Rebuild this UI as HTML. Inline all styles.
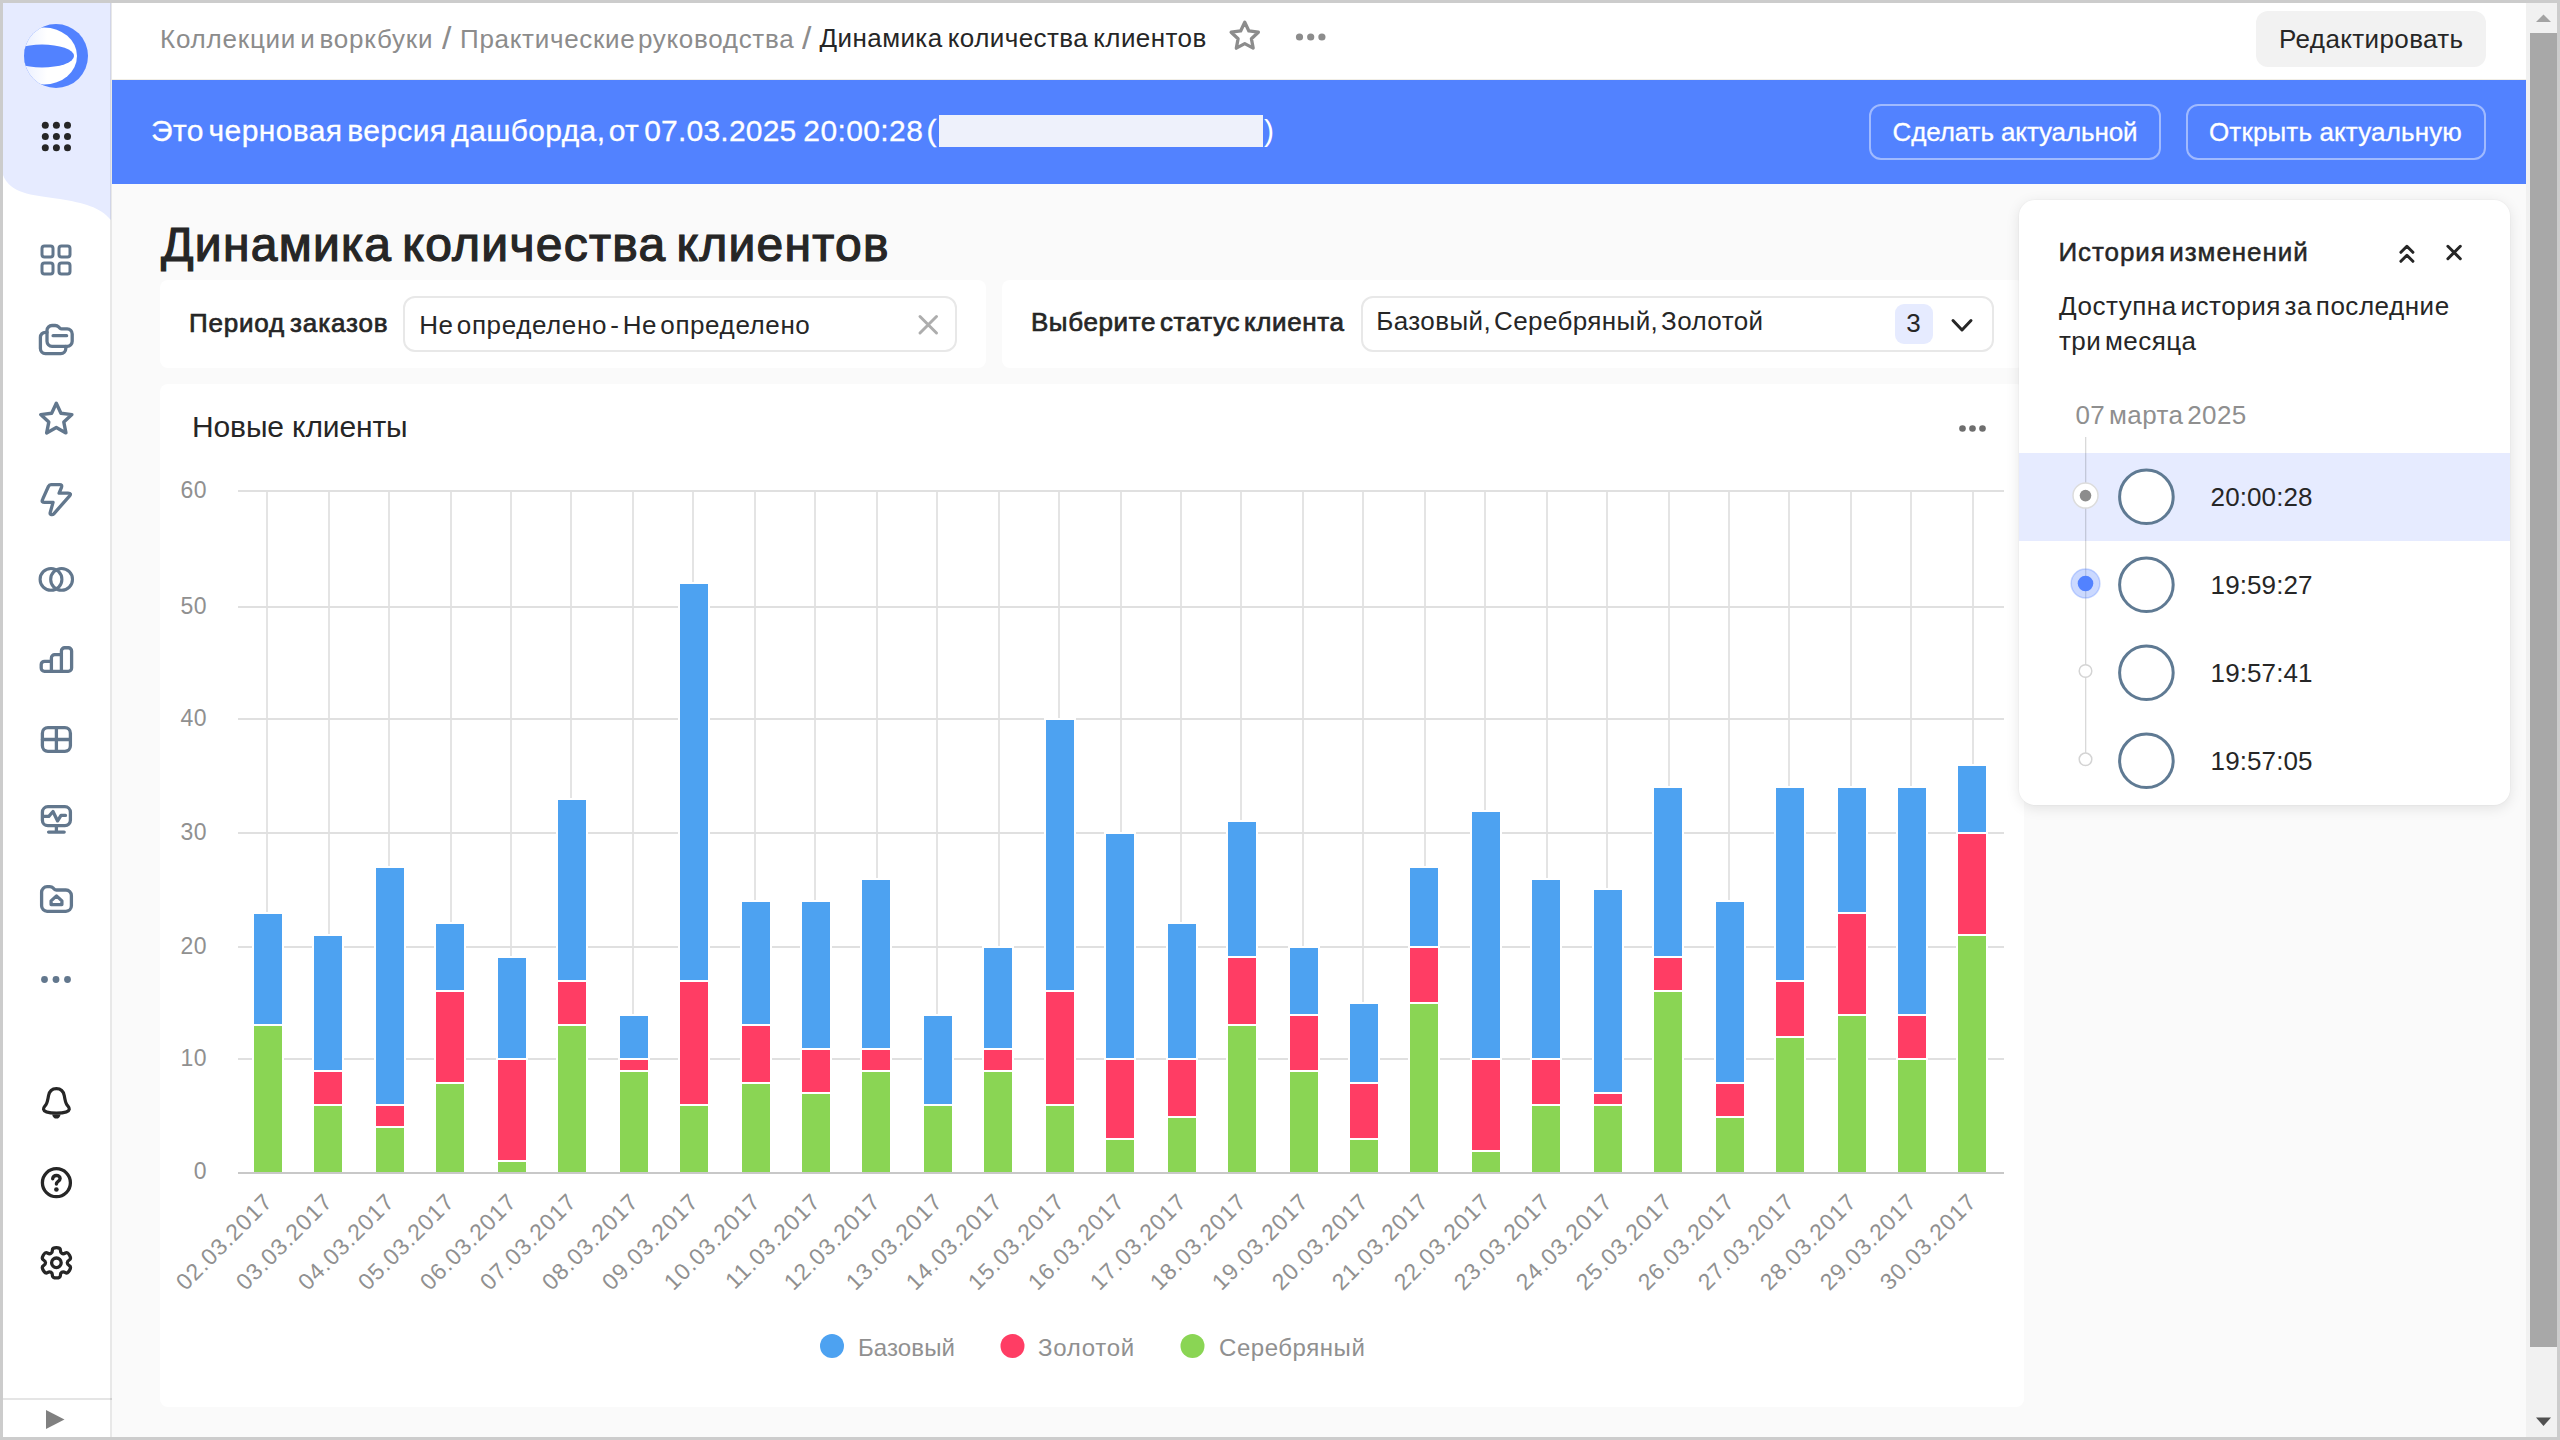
<!DOCTYPE html>
<html lang="ru">
<head>
<meta charset="utf-8">
<title>Динамика количества клиентов</title>
<style>
html,body{margin:0;padding:0;}
body{width:2560px;height:1440px;overflow:hidden;background:#ccc;font-family:"Liberation Sans",sans-serif;color:#262626;position:relative;}
.abs{position:absolute;}
.t{position:absolute;white-space:nowrap;line-height:1;}
#page{position:absolute;left:3px;top:3px;width:2554px;height:1434px;background:#fafafa;overflow:hidden;}
/* coordinates inside #page are offset by -3; use #o wrapper to keep absolute device coords */
#o{position:absolute;left:-3px;top:-3px;width:2560px;height:1440px;}
#side{left:3px;top:3px;width:109px;height:1434px;background:#fff;}
#sideline{left:110px;top:3px;width:2px;height:1434px;background:rgba(0,0,0,.09);}
#head{left:112px;top:3px;width:2414px;height:77px;background:#fff;}
#headline{left:112px;top:79px;width:2414px;height:1px;background:#f1eee6;}
#banner{left:112px;top:80px;width:2414px;height:104px;background:#5282ff;}
.bc{font-size:27px;top:24px;color:#8c8c8c;}
.card{position:absolute;background:#fff;border-radius:8px;}
.btn-o{position:absolute;border:2px solid rgba(255,255,255,.45);border-radius:12px;box-sizing:border-box;}
#sb{left:2526px;top:3px;width:31px;height:1434px;background:#f1f1f1;}
#sbthumb{left:2530px;top:33px;width:27px;height:1314px;background:#a8a8a8;}
#panel{left:2019px;top:200px;width:491px;height:605px;background:#fff;border-radius:16px;box-shadow:0 0 0 1px rgba(0,0,0,.015),0 3px 14px rgba(0,0,0,.10);overflow:hidden;}

@media (max-width:1400px){html{zoom:.5}}

</style>
</head>
<body>
<div id="page"><div id="o">
<div class="abs" id="side"></div>
<svg class="abs" style="left:3px;top:3px" width="108" height="230" viewBox="3 3 108 230"><path d="M3 3 H111 V220 C100 207 84 203 60 199 C30 195 10 193 3 175 Z" fill="#e6ebff"/></svg>
<div class="abs" id="sideline"></div>
<svg class="abs" style="left:22px;top:22px" width="68" height="68" viewBox="-34 -34 68 68"><defs><linearGradient id="lg" x1="0" y1="0" x2="1" y2="0"><stop offset="0" stop-color="#dfe7ff"/><stop offset="0.55" stop-color="#ffffff"/></linearGradient><clipPath id="lc"><circle r="32"/></clipPath></defs><circle r="32" fill="#5282ff"/><g clip-path="url(#lc)"><ellipse cx="-12" cy="0" rx="33" ry="28.5" fill="url(#lg)"/><ellipse cx="-14" cy="0" rx="32" ry="11.5" fill="#5282ff"/></g></svg>
<svg class="abs" style="left:36px;top:116px" width="40" height="40" viewBox="36 116 40 40" fill="#262626"><circle cx="45.3" cy="125.3" r="3.5"/><circle cx="56.4" cy="125.3" r="3.5"/><circle cx="67.5" cy="125.3" r="3.5"/><circle cx="45.3" cy="136.5" r="3.5"/><circle cx="56.4" cy="136.5" r="3.5"/><circle cx="67.5" cy="136.5" r="3.5"/><circle cx="45.3" cy="147.7" r="3.5"/><circle cx="56.4" cy="147.7" r="3.5"/><circle cx="67.5" cy="147.7" r="3.5"/></svg>
<svg class="abs" style="left:34px;top:238px" width="45" height="45" viewBox="-22.00 -22.00 45 45" fill="none" stroke-linecap="round" stroke-linejoin="round" ><g stroke="#62778d" stroke-width="3"><rect x="-14" y="-14" width="11" height="11" rx="2.5"/><rect x="3" y="-14" width="11" height="11" rx="2.5"/><rect x="-14" y="3" width="11" height="11" rx="2.5"/><rect x="3" y="3" width="11" height="11" rx="2.5"/></g></svg>
<svg class="abs" style="left:34px;top:317px" width="45" height="45" viewBox="-22.00 -22.00 45 45" fill="none" stroke-linecap="round" stroke-linejoin="round" ><g stroke="#62778d" stroke-width="3.3"><path d="M-9 2.3 V-8.5 a5 5 0 0 1 5 -5 h3.2 c1.3 0 2.5 .5 3.4 1.4 l1.2 1.2 c.5 .5 1.2 .8 1.9 .8 H11.2 a5 5 0 0 1 5 5 V2.3 a5 5 0 0 1 -5 5 H-4 a5 5 0 0 1 -5 -5 Z"/><path d="M-9 -6.7 h-1.6 a5 5 0 0 0 -5 5 V9.6 a5 5 0 0 0 5 5 H4.8 a5 5 0 0 0 5 -5 V7.3"/><path d="M-2.9 -3.3 H10.6"/></g></svg>
<svg class="abs" style="left:34px;top:397px" width="45" height="45" viewBox="-22.30 -22.65 45 45" fill="none" stroke-linecap="round" stroke-linejoin="round" ><path d="M0.00 -16.40 L4.64 -6.39 L15.60 -5.07 L7.51 2.44 L9.64 13.27 L0.00 7.90 L-9.64 13.27 L-7.51 2.44 L-15.60 -5.07 L-4.64 -6.39 Z" stroke="#62778d" stroke-width="3.4"/></svg>
<svg class="abs" style="left:34px;top:477px" width="45" height="45" viewBox="-22.00 -22.00 45 45" fill="none" stroke-linecap="round" stroke-linejoin="round" ><path d="M-7.5 -12.7 Q-6.8 -14.4 -5 -14.4 H3.6 Q6.4 -14.4 5.5 -11.7 L3.1 -5.8 H12 Q16 -5.8 13.4 -2.8 L-2.2 14.8 C-3.4 16.2 -6.4 16 -5.8 13.6 L-2.95 3.4 H-11.2 Q-14.9 3.4 -13.4 0.4 Z" stroke="#62778d" stroke-width="3.3"/></svg>
<svg class="abs" style="left:34px;top:557px" width="45" height="45" viewBox="-22.30 -22.40 45 45" fill="none" stroke-linecap="round" stroke-linejoin="round" ><g stroke="#62778d" stroke-width="3.1"><circle cx="-5.3" cy="0" r="10.9"/><circle cx="5.3" cy="0" r="10.9"/></g></svg>
<svg class="abs" style="left:34px;top:637px" width="45" height="45" viewBox="-22.00 -22.00 45 45" fill="none" stroke-linecap="round" stroke-linejoin="round" ><g stroke="#62778d" stroke-width="3.3"><path d="M-14.8 9 V5.6 a3.3 3.3 0 0 1 3.3 -3.3 H-4.6 V-1.1 a3.3 3.3 0 0 1 3.3 -3.3 H5.4 V-7.95 a3.3 3.3 0 0 1 3.3 -3.3 H12.3 a3.3 3.3 0 0 1 3.3 3.3 V9 a3.3 3.3 0 0 1 -3.3 3.3 H-11.5 a3.3 3.3 0 0 1 -3.3 -3.3 Z"/><path d="M-4.6 2.3 V12.3 M5.4 -4.4 V12.3"/></g></svg>
<svg class="abs" style="left:34px;top:717px" width="45" height="45" viewBox="-22.40 -22.50 45 45" fill="none" stroke-linecap="round" stroke-linejoin="round" ><g stroke="#62778d" stroke-width="3.3"><rect x="-14" y="-11.85" width="28" height="23.7" rx="5.5"/><path d="M0 -11.5 v23 M-14 0 h28"/></g></svg>
<svg class="abs" style="left:34px;top:797px" width="45" height="45" viewBox="-22.40 -22.50 45 45" fill="none" stroke-linecap="round" stroke-linejoin="round" ><g stroke="#62778d" stroke-width="3.3"><rect x="-14" y="-12.8" width="28" height="19" rx="5.5"/><path d="M0 6.2 v6.4 M-7.8 12.6 h15.6"/><path d="M-12.6 -3.2 H-7.6 L-3.4 -8 L1.2 1.4 L4.6 -4.1 H9.1"/></g></svg>
<svg class="abs" style="left:34px;top:877px" width="45" height="45" viewBox="-22.00 -22.00 45 45" fill="none" stroke-linecap="round" stroke-linejoin="round" ><g stroke="#62778d" stroke-width="3.3"><path d="M-14.4 6.8 V-6.8 a5.5 5.5 0 0 1 5.5 -5.5 h2.6 c1.4 0 2.7 .55 3.6 1.5 l.9 .9 c.6 .6 1.4 .9 2.2 .9 H9.9 a5.5 5.5 0 0 1 5.5 5.5 V6.8 a5.5 5.5 0 0 1 -5.5 5.5 H-8.9 a5.5 5.5 0 0 1 -5.5 -5.5 Z"/><path d="M-4.9 5.6 V1.9 L0.5 -3.1 L5.9 1.9 V5.6 Z"/></g></svg>
<svg class="abs" style="left:34px;top:957px" width="45" height="45" viewBox="-22.00 -22.50 45 45" fill="none" stroke-linecap="round" stroke-linejoin="round" ><g fill="#62778d"><circle cx="-11.5" r="3.4"/><circle cx="0" r="3.4"/><circle cx="11.5" r="3.4"/></g></svg>
<svg class="abs" style="left:34px;top:1081px" width="45" height="45" viewBox="-22.00 -22.00 45 45" fill="none" stroke-linecap="round" stroke-linejoin="round" ><path d="M0.4 -14.4 C5.2 -14.4 7.6 -11.2 8.3 -7.2 C9 -2.8 9.4 -0.5 10.8 1.6 C12 3.4 13.6 4.4 13.3 6.2 C13 8.2 9 10.2 0.4 10.2 C-8.2 10.2 -12.2 8.2 -12.5 6.2 C-12.8 4.4 -11.2 3.4 -10 1.6 C-8.6 -0.5 -8.2 -2.8 -7.5 -7.2 C-6.8 -11.2 -4.4 -14.4 0.4 -14.4 Z" stroke="#262626" stroke-width="3.2"/><path d="M-3.8 11.4 H4.6 C4.2 14 2.6 15.6 0.4 15.6 C-1.8 15.6 -3.4 14 -3.8 11.4 Z" fill="#262626"/></svg>
<svg class="abs" style="left:34px;top:1160px" width="45" height="45" viewBox="-22.40 -22.70 45 45" fill="none" stroke-linecap="round" stroke-linejoin="round" ><g stroke="#262626"><circle r="14" stroke-width="3.3"/><path d="M-3.7 -3.9 C-3.7 -6 -2 -7.2 0 -7.2 C2.1 -7.2 3.7 -6 3.7 -4.2 C3.7 -2.7 2.7 -1.9 1.5 -1.1 C0.5 -0.4 0 0.2 0 1.3" stroke-width="3.4"/></g><circle cx="0" cy="6.8" r="2.3" fill="#262626"/></svg>
<svg class="abs" style="left:34px;top:1240px" width="45" height="45" viewBox="-22.40 -22.80 45 45" fill="none" stroke-linecap="round" stroke-linejoin="round" ><g stroke="#262626" stroke-width="3.3"><path d="M-4.00 -12.72 Q-4.06 -15.17 -0.00 -15.17 Q4.06 -15.17 4.00 -12.72 Q3.94 -10.27 5.43 -9.41 Q6.92 -8.55 9.01 -9.83 Q11.10 -11.10 13.13 -7.58 Q15.17 -4.06 13.01 -2.89 Q10.86 -1.72 10.86 0.00 Q10.86 1.72 13.01 2.89 Q15.17 4.06 13.13 7.58 Q11.10 11.10 9.01 9.83 Q6.92 8.55 5.43 9.41 Q3.94 10.27 4.00 12.72 Q4.06 15.17 -0.00 15.17 Q-4.06 15.17 -4.00 12.72 Q-3.94 10.27 -5.43 9.41 Q-6.92 8.55 -9.01 9.83 Q-11.10 11.10 -13.13 7.58 Q-15.17 4.06 -13.01 2.89 Q-10.86 1.72 -10.86 0.00 Q-10.86 -1.72 -13.01 -2.89 Q-15.17 -4.06 -13.13 -7.58 Q-11.10 -11.10 -9.01 -9.83 Q-6.92 -8.55 -5.43 -9.41 Q-3.94 -10.27 -4.00 -12.72 Z"/><circle r="4.8"/></g></svg>
<div class="abs" style="left:3px;top:1398px;width:109px;height:2px;background:rgba(0,0,0,.1)"></div>
<svg class="abs" style="left:44px;top:1408px" width="24" height="24" viewBox="44 1408 24 24"><path d="M46 1410 L64.500 1419.500 L46 1429 Z" fill="#808080"/></svg>
<div class="abs" id="head"></div><div class="abs" id="headline"></div>
<div class="t " style="left:160.0px;top:25.5px;font-size:26px;letter-spacing:0.780px;word-spacing:-4.00px;color:#8c8c8c;">Коллекции и воркбуки</div>
<div class="t " style="left:442.0px;top:26.5px;font-size:26px;color:#8c8c8c;transform-origin:0 85%;transform:scale(1.3,1.22);">/</div>
<div class="t " style="left:460.0px;top:25.5px;font-size:26px;letter-spacing:0.700px;word-spacing:-5.50px;color:#8c8c8c;">Практические руководства</div>
<div class="t " style="left:801.5px;top:26.5px;font-size:26px;color:#8c8c8c;transform-origin:0 85%;transform:scale(1.3,1.22);">/</div>
<div class="t " style="left:819.5px;top:24.5px;font-size:26px;letter-spacing:0.420px;word-spacing:-2.50px;color:#262626;">Динамика количества клиентов</div>
<svg class="abs" style="left:1224px;top:16px" width="42" height="42" viewBox="-20.75 -20.6 42 42" fill="none" stroke="#8c8c8c" stroke-width="3.3" stroke-linejoin="round"><path d="M0.00 -14.30 L4.11 -5.66 L13.60 -4.42 L6.66 2.16 L8.41 11.57 L0.00 7.00 L-8.41 11.57 L-6.66 2.16 L-13.60 -4.42 L-4.11 -5.66 Z"/></svg>
<svg class="abs" style="left:1290px;top:27px" width="40" height="20" viewBox="1290 27 40 20" fill="#8c8c8c"><circle cx="1299.5" cy="37" r="3.6"/><circle cx="1310.7" cy="37" r="3.6"/><circle cx="1321.9" cy="37" r="3.6"/></svg>
<div class="abs" style="left:2256px;top:11px;width:230px;height:56px;border-radius:12px;background:#f2f2f2"></div>
<div class="t " style="left:2279.0px;top:26.0px;font-size:26px;letter-spacing:0.380px;color:#262626;">Редактировать</div>
<div class="abs" id="banner"></div>
<div class="t " style="left:151.0px;top:115.9px;font-size:30px;letter-spacing:0.380px;word-spacing:-3.90px;color:#fff;-webkit-text-stroke:0.3px #fff;">Это черновая версия дашборда,</div>
<div class="t " style="left:608.8px;top:115.9px;font-size:30px;letter-spacing:0.220px;word-spacing:-3.40px;color:#fff;-webkit-text-stroke:0.3px #fff;">от 07.03.2025</div>
<div class="t " style="left:803.3px;top:115.9px;font-size:30px;letter-spacing:0.400px;word-spacing:-5.60px;color:#fff;-webkit-text-stroke:0.3px #fff;">20:00:28 (</div>
<div class="abs" style="left:939px;top:115px;width:324px;height:32px;background:#eef1fb"></div>
<div class="t " style="left:1264.0px;top:115.9px;font-size:30px;color:#fff;">)</div>
<div class="btn-o" style="left:1869px;top:104px;width:292px;height:56px"></div>
<div class="t " style="left:1892.5px;top:119.0px;font-size:26px;letter-spacing:-0.100px;color:#fff;-webkit-text-stroke:0.3px #fff;">Сделать актуальной</div>
<div class="btn-o" style="left:2186px;top:104px;width:300px;height:56px"></div>
<div class="t " style="left:2209.0px;top:119.0px;font-size:26px;letter-spacing:0.140px;color:#fff;-webkit-text-stroke:0.3px #fff;">Открыть актуальную</div>
<div class="t " style="left:161.1px;top:220.9px;font-size:48px;letter-spacing:1.270px;word-spacing:-4.60px;color:#262626;-webkit-text-stroke:1.2px #262626;">Динамика количества клиентов</div>
<div class="card" style="left:160px;top:280px;width:826px;height:88px"></div>
<div class="t " style="left:188.9px;top:309.7px;font-size:26px;letter-spacing:0.830px;word-spacing:-3.00px;-webkit-text-stroke:0.7px #262626;">Период заказов</div>
<div class="abs" style="left:403px;top:296px;width:554px;height:56px;box-sizing:border-box;border:2px solid #e8e8e8;border-radius:12px;background:#fff"></div>
<div class="t " style="left:419.2px;top:311.6px;font-size:26px;letter-spacing:0.600px;word-spacing:-4.60px;">Не определено - Не определено</div>
<svg class="abs" style="left:914px;top:310px" width="28" height="28" viewBox="914 310 28 28" stroke="#adadad" stroke-width="3" stroke-linecap="round"><path d="M920 316.500 L936.500 333 M936.500 316.500 L920 333"/></svg>
<div class="card" style="left:1002px;top:280px;width:1022px;height:88px"></div>
<div class="t " style="left:1030.9px;top:309.2px;font-size:26px;letter-spacing:0.630px;word-spacing:-4.00px;-webkit-text-stroke:0.7px #262626;">Выберите статус клиента</div>
<div class="abs" style="left:1361px;top:296px;width:633px;height:56px;box-sizing:border-box;border:2px solid #e8e8e8;border-radius:12px;background:#fff"></div>
<div class="t " style="left:1376.3px;top:308.4px;font-size:26px;letter-spacing:0.400px;word-spacing:-4.70px;">Базовый, Серебряный, Золотой</div>
<div class="abs" style="left:1895px;top:304px;width:38px;height:40px;border-radius:9px;background:#e6ebff"></div>
<div class="t " style="left:1906.3px;top:310.2px;font-size:26px;">3</div>
<svg class="abs" style="left:1946px;top:312px" width="32" height="28" viewBox="1946 312 32 28" fill="none" stroke="#262626" stroke-width="3" stroke-linecap="round" stroke-linejoin="round"><path d="M1953 320.500 L1962 330 L1971 320.500"/></svg>
<div class="card" style="left:160px;top:384px;width:1864px;height:1023px;overflow:hidden">
<svg class="abs" style="left:0;top:0" width="1864" height="1023" viewBox="160 384 1864 1023">
<g fill="#e4e4e4"><rect x="266" y="491" width="2" height="681"/><rect x="328" y="491" width="2" height="681"/><rect x="388" y="491" width="2" height="681"/><rect x="450" y="491" width="2" height="681"/><rect x="510" y="491" width="2" height="681"/><rect x="570" y="491" width="2" height="681"/><rect x="632" y="491" width="2" height="681"/><rect x="692" y="491" width="2" height="681"/><rect x="754" y="491" width="2" height="681"/><rect x="814" y="491" width="2" height="681"/><rect x="876" y="491" width="2" height="681"/><rect x="936" y="491" width="2" height="681"/><rect x="998" y="491" width="2" height="681"/><rect x="1058" y="491" width="2" height="681"/><rect x="1120" y="491" width="2" height="681"/><rect x="1180" y="491" width="2" height="681"/><rect x="1240" y="491" width="2" height="681"/><rect x="1302" y="491" width="2" height="681"/><rect x="1362" y="491" width="2" height="681"/><rect x="1424" y="491" width="2" height="681"/><rect x="1484" y="491" width="2" height="681"/><rect x="1546" y="491" width="2" height="681"/><rect x="1606" y="491" width="2" height="681"/><rect x="1668" y="491" width="2" height="681"/><rect x="1728" y="491" width="2" height="681"/><rect x="1788" y="491" width="2" height="681"/><rect x="1850" y="491" width="2" height="681"/><rect x="1910" y="491" width="2" height="681"/><rect x="1972" y="491" width="2" height="681"/></g>
<g fill="#e0e0e0"><rect x="238" y="490" width="1766" height="2"/><rect x="238" y="606" width="1766" height="2"/><rect x="238" y="718" width="1766" height="2"/><rect x="238" y="832" width="1766" height="2"/><rect x="238" y="946" width="1766" height="2"/><rect x="238" y="1058" width="1766" height="2"/></g>
<g stroke="#fff" stroke-width="2"><rect x="253" y="1025" width="30" height="148" fill="#8ad554"/><rect x="253" y="913" width="30" height="112" fill="#4da2f1"/><rect x="313" y="1105" width="30" height="68" fill="#8ad554"/><rect x="313" y="1071" width="30" height="34" fill="#ff3d64"/><rect x="313" y="935" width="30" height="136" fill="#4da2f1"/><rect x="375" y="1127" width="30" height="46" fill="#8ad554"/><rect x="375" y="1105" width="30" height="22" fill="#ff3d64"/><rect x="375" y="867" width="30" height="238" fill="#4da2f1"/><rect x="435" y="1083" width="30" height="90" fill="#8ad554"/><rect x="435" y="991" width="30" height="92" fill="#ff3d64"/><rect x="435" y="923" width="30" height="68" fill="#4da2f1"/><rect x="497" y="1161" width="30" height="12" fill="#8ad554"/><rect x="497" y="1059" width="30" height="102" fill="#ff3d64"/><rect x="497" y="957" width="30" height="102" fill="#4da2f1"/><rect x="557" y="1025" width="30" height="148" fill="#8ad554"/><rect x="557" y="981" width="30" height="44" fill="#ff3d64"/><rect x="557" y="799" width="30" height="182" fill="#4da2f1"/><rect x="619" y="1071" width="30" height="102" fill="#8ad554"/><rect x="619" y="1059" width="30" height="12" fill="#ff3d64"/><rect x="619" y="1015" width="30" height="44" fill="#4da2f1"/><rect x="679" y="1105" width="30" height="68" fill="#8ad554"/><rect x="679" y="981" width="30" height="124" fill="#ff3d64"/><rect x="679" y="583" width="30" height="398" fill="#4da2f1"/><rect x="741" y="1083" width="30" height="90" fill="#8ad554"/><rect x="741" y="1025" width="30" height="58" fill="#ff3d64"/><rect x="741" y="901" width="30" height="124" fill="#4da2f1"/><rect x="801" y="1093" width="30" height="80" fill="#8ad554"/><rect x="801" y="1049" width="30" height="44" fill="#ff3d64"/><rect x="801" y="901" width="30" height="148" fill="#4da2f1"/><rect x="861" y="1071" width="30" height="102" fill="#8ad554"/><rect x="861" y="1049" width="30" height="22" fill="#ff3d64"/><rect x="861" y="879" width="30" height="170" fill="#4da2f1"/><rect x="923" y="1105" width="30" height="68" fill="#8ad554"/><rect x="923" y="1015" width="30" height="90" fill="#4da2f1"/><rect x="983" y="1071" width="30" height="102" fill="#8ad554"/><rect x="983" y="1049" width="30" height="22" fill="#ff3d64"/><rect x="983" y="947" width="30" height="102" fill="#4da2f1"/><rect x="1045" y="1105" width="30" height="68" fill="#8ad554"/><rect x="1045" y="991" width="30" height="114" fill="#ff3d64"/><rect x="1045" y="719" width="30" height="272" fill="#4da2f1"/><rect x="1105" y="1139" width="30" height="34" fill="#8ad554"/><rect x="1105" y="1059" width="30" height="80" fill="#ff3d64"/><rect x="1105" y="833" width="30" height="226" fill="#4da2f1"/><rect x="1167" y="1117" width="30" height="56" fill="#8ad554"/><rect x="1167" y="1059" width="30" height="58" fill="#ff3d64"/><rect x="1167" y="923" width="30" height="136" fill="#4da2f1"/><rect x="1227" y="1025" width="30" height="148" fill="#8ad554"/><rect x="1227" y="957" width="30" height="68" fill="#ff3d64"/><rect x="1227" y="821" width="30" height="136" fill="#4da2f1"/><rect x="1289" y="1071" width="30" height="102" fill="#8ad554"/><rect x="1289" y="1015" width="30" height="56" fill="#ff3d64"/><rect x="1289" y="947" width="30" height="68" fill="#4da2f1"/><rect x="1349" y="1139" width="30" height="34" fill="#8ad554"/><rect x="1349" y="1083" width="30" height="56" fill="#ff3d64"/><rect x="1349" y="1003" width="30" height="80" fill="#4da2f1"/><rect x="1409" y="1003" width="30" height="170" fill="#8ad554"/><rect x="1409" y="947" width="30" height="56" fill="#ff3d64"/><rect x="1409" y="867" width="30" height="80" fill="#4da2f1"/><rect x="1471" y="1151" width="30" height="22" fill="#8ad554"/><rect x="1471" y="1059" width="30" height="92" fill="#ff3d64"/><rect x="1471" y="811" width="30" height="248" fill="#4da2f1"/><rect x="1531" y="1105" width="30" height="68" fill="#8ad554"/><rect x="1531" y="1059" width="30" height="46" fill="#ff3d64"/><rect x="1531" y="879" width="30" height="180" fill="#4da2f1"/><rect x="1593" y="1105" width="30" height="68" fill="#8ad554"/><rect x="1593" y="1093" width="30" height="12" fill="#ff3d64"/><rect x="1593" y="889" width="30" height="204" fill="#4da2f1"/><rect x="1653" y="991" width="30" height="182" fill="#8ad554"/><rect x="1653" y="957" width="30" height="34" fill="#ff3d64"/><rect x="1653" y="787" width="30" height="170" fill="#4da2f1"/><rect x="1715" y="1117" width="30" height="56" fill="#8ad554"/><rect x="1715" y="1083" width="30" height="34" fill="#ff3d64"/><rect x="1715" y="901" width="30" height="182" fill="#4da2f1"/><rect x="1775" y="1037" width="30" height="136" fill="#8ad554"/><rect x="1775" y="981" width="30" height="56" fill="#ff3d64"/><rect x="1775" y="787" width="30" height="194" fill="#4da2f1"/><rect x="1837" y="1015" width="30" height="158" fill="#8ad554"/><rect x="1837" y="913" width="30" height="102" fill="#ff3d64"/><rect x="1837" y="787" width="30" height="126" fill="#4da2f1"/><rect x="1897" y="1059" width="30" height="114" fill="#8ad554"/><rect x="1897" y="1015" width="30" height="44" fill="#ff3d64"/><rect x="1897" y="787" width="30" height="228" fill="#4da2f1"/><rect x="1957" y="935" width="30" height="238" fill="#8ad554"/><rect x="1957" y="833" width="30" height="102" fill="#ff3d64"/><rect x="1957" y="765" width="30" height="68" fill="#4da2f1"/></g>
<rect x="238" y="1172" width="1766" height="2" fill="#c8c8c8"/>
<g font-family='"Liberation Sans", sans-serif' font-size="23" fill="#909090" letter-spacing="0.4"><text x="207" y="1178.8" text-anchor="end">0</text><text x="207" y="1065.8" text-anchor="end">10</text><text x="207" y="953.8" text-anchor="end">20</text><text x="207" y="839.8" text-anchor="end">30</text><text x="207" y="725.8" text-anchor="end">40</text><text x="207" y="613.8" text-anchor="end">50</text><text x="207" y="497.8" text-anchor="end">60</text></g>
<g font-family='"Liberation Sans", sans-serif' font-size="23" fill="#909090" letter-spacing="1.0"><text x="274.0" y="1203.0" text-anchor="end" transform="rotate(-45 274.0 1203.0)">02.03.2017</text><text x="334.0" y="1203.0" text-anchor="end" transform="rotate(-45 334.0 1203.0)">03.03.2017</text><text x="396.0" y="1203.0" text-anchor="end" transform="rotate(-45 396.0 1203.0)">04.03.2017</text><text x="456.0" y="1203.0" text-anchor="end" transform="rotate(-45 456.0 1203.0)">05.03.2017</text><text x="518.0" y="1203.0" text-anchor="end" transform="rotate(-45 518.0 1203.0)">06.03.2017</text><text x="578.0" y="1203.0" text-anchor="end" transform="rotate(-45 578.0 1203.0)">07.03.2017</text><text x="640.0" y="1203.0" text-anchor="end" transform="rotate(-45 640.0 1203.0)">08.03.2017</text><text x="700.0" y="1203.0" text-anchor="end" transform="rotate(-45 700.0 1203.0)">09.03.2017</text><text x="762.0" y="1203.0" text-anchor="end" transform="rotate(-45 762.0 1203.0)">10.03.2017</text><text x="822.0" y="1203.0" text-anchor="end" transform="rotate(-45 822.0 1203.0)">11.03.2017</text><text x="882.0" y="1203.0" text-anchor="end" transform="rotate(-45 882.0 1203.0)">12.03.2017</text><text x="944.0" y="1203.0" text-anchor="end" transform="rotate(-45 944.0 1203.0)">13.03.2017</text><text x="1004.0" y="1203.0" text-anchor="end" transform="rotate(-45 1004.0 1203.0)">14.03.2017</text><text x="1066.0" y="1203.0" text-anchor="end" transform="rotate(-45 1066.0 1203.0)">15.03.2017</text><text x="1126.0" y="1203.0" text-anchor="end" transform="rotate(-45 1126.0 1203.0)">16.03.2017</text><text x="1188.0" y="1203.0" text-anchor="end" transform="rotate(-45 1188.0 1203.0)">17.03.2017</text><text x="1248.0" y="1203.0" text-anchor="end" transform="rotate(-45 1248.0 1203.0)">18.03.2017</text><text x="1310.0" y="1203.0" text-anchor="end" transform="rotate(-45 1310.0 1203.0)">19.03.2017</text><text x="1370.0" y="1203.0" text-anchor="end" transform="rotate(-45 1370.0 1203.0)">20.03.2017</text><text x="1430.0" y="1203.0" text-anchor="end" transform="rotate(-45 1430.0 1203.0)">21.03.2017</text><text x="1492.0" y="1203.0" text-anchor="end" transform="rotate(-45 1492.0 1203.0)">22.03.2017</text><text x="1552.0" y="1203.0" text-anchor="end" transform="rotate(-45 1552.0 1203.0)">23.03.2017</text><text x="1614.0" y="1203.0" text-anchor="end" transform="rotate(-45 1614.0 1203.0)">24.03.2017</text><text x="1674.0" y="1203.0" text-anchor="end" transform="rotate(-45 1674.0 1203.0)">25.03.2017</text><text x="1736.0" y="1203.0" text-anchor="end" transform="rotate(-45 1736.0 1203.0)">26.03.2017</text><text x="1796.0" y="1203.0" text-anchor="end" transform="rotate(-45 1796.0 1203.0)">27.03.2017</text><text x="1858.0" y="1203.0" text-anchor="end" transform="rotate(-45 1858.0 1203.0)">28.03.2017</text><text x="1918.0" y="1203.0" text-anchor="end" transform="rotate(-45 1918.0 1203.0)">29.03.2017</text><text x="1978.0" y="1203.0" text-anchor="end" transform="rotate(-45 1978.0 1203.0)">30.03.2017</text></g>
<g font-family='"Liberation Sans", sans-serif' font-size="24" fill="#909090">
<circle cx="832.0" cy="1346" r="12" fill="#4da2f1"/><text x="858.0" y="1356.3" letter-spacing="0.10">Базовый</text>
<circle cx="1012.5" cy="1346" r="12" fill="#ff3d64"/><text x="1038.0" y="1356.3" letter-spacing="0.70">Золотой</text>
<circle cx="1192.5" cy="1346" r="12" fill="#8ad554"/><text x="1219.0" y="1356.3" letter-spacing="0.55">Серебряный</text>
</g>
</svg>
</div>
<div class="t " style="left:192.0px;top:412.1px;font-size:30px;letter-spacing:-0.127px;">Новые клиенты</div>
<svg class="abs" style="left:1954px;top:418px" width="40" height="20" viewBox="1954 418 40 20" fill="#6e6e6e"><circle cx="1962.500" cy="428.500" r="3.3"/><circle cx="1972.500" cy="428.500" r="3.3"/><circle cx="1982.500" cy="428.500" r="3.3"/></svg>
<div class="abs" id="panel"></div>
<div class="t " style="left:2058.5px;top:239.3px;font-size:26px;letter-spacing:0.920px;word-spacing:-4.60px;-webkit-text-stroke:0.5px #262626;">История изменений</div>
<svg class="abs" style="left:2392px;top:238px" width="30" height="30" viewBox="2392 238 30 30" fill="none" stroke="#262626" stroke-width="3" stroke-linecap="round" stroke-linejoin="round"><path d="M2400.900 252.300 L2406.900 246.300 L2412.900 252.300 M2400.900 261.300 L2406.900 255.300 L2412.900 261.300"/></svg>
<svg class="abs" style="left:2440px;top:238px" width="30" height="30" viewBox="2440 238 30 30" fill="none" stroke="#262626" stroke-width="3" stroke-linecap="round"><path d="M2447.900 246.300 L2460.300 258.700 M2460.300 246.300 L2447.900 258.700"/></svg>
<div class="t " style="left:2059.0px;top:293.2px;font-size:26px;letter-spacing:0.530px;word-spacing:-4.00px;">Доступна история за последние</div>
<div class="t " style="left:2059.0px;top:328.3px;font-size:26px;letter-spacing:0.460px;word-spacing:-4.00px;">три месяца</div>
<div class="t " style="left:2075.5px;top:401.8px;font-size:26px;letter-spacing:0.400px;word-spacing:-3.80px;color:#8f8f8f;">07 марта 2025</div>
<div class="abs" style="left:2019px;top:453px;width:491px;height:88px;background:#e6ebff"></div>
<svg class="abs" style="left:2060px;top:430px" width="130" height="370" viewBox="2060 430 130 370"><path d="M2085.700 437 V759" stroke="rgba(0,0,0,.17)" stroke-width="1.200" fill="none"/><circle cx="2085.500" cy="495.600" r="12.500" fill="#fff" stroke="#dcdcdc" stroke-width="1.500"/><circle cx="2085.500" cy="495.600" r="5.800" fill="#8c8c8c"/><circle cx="2085.500" cy="583.500" r="14.400" fill="rgba(82,130,255,.3)" stroke="rgba(82,130,255,.3)" stroke-width="1.500"/><circle cx="2085.500" cy="583.500" r="7.800" fill="#5282ff"/><circle cx="2085.500" cy="671" r="6.300" fill="#fff" stroke="#d4d4d4" stroke-width="1.500"/><circle cx="2085.500" cy="759.300" r="6.300" fill="#fff" stroke="#d4d4d4" stroke-width="1.500"/><circle cx="2146.400" cy="496.8" r="26.800" fill="#fff" stroke="#5f7a93" stroke-width="3"/><circle cx="2146.400" cy="584.8" r="26.800" fill="#fff" stroke="#5f7a93" stroke-width="3"/><circle cx="2146.400" cy="672.8" r="26.800" fill="#fff" stroke="#5f7a93" stroke-width="3"/><circle cx="2146.400" cy="760.8" r="26.800" fill="#fff" stroke="#5f7a93" stroke-width="3"/></svg>
<div class="t " style="left:2210.6px;top:483.6px;font-size:26px;letter-spacing:0.100px;">20:00:28</div>
<div class="t " style="left:2210.6px;top:571.6px;font-size:26px;letter-spacing:0.100px;">19:59:27</div>
<div class="t " style="left:2210.6px;top:659.6px;font-size:26px;letter-spacing:0.100px;">19:57:41</div>
<div class="t " style="left:2210.6px;top:747.6px;font-size:26px;letter-spacing:0.100px;">19:57:05</div>
<div class="abs" id="sb"></div><div class="abs" id="sbthumb"></div>
<svg class="abs" style="left:2526px;top:3px" width="31" height="30" viewBox="2526 3 31 30"><path d="M2536 22 L2543.500 14.500 L2551 22 Z" fill="#a3a3a3"/></svg>
<svg class="abs" style="left:2526px;top:1407px" width="31" height="30" viewBox="2526 1407 31 30"><path d="M2536 1417.500 L2551 1417.500 L2543.500 1426 Z" fill="#505050"/></svg>
</div></div>
</body>
</html>
